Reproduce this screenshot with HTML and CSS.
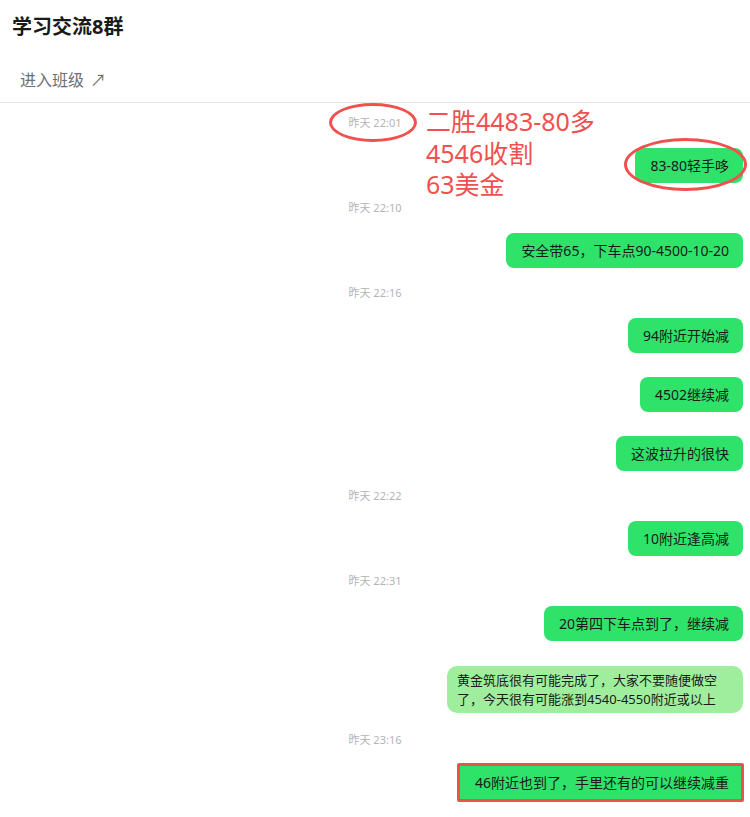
FILE: index.html
```
<!DOCTYPE html>
<html lang="zh-CN">
<head>
    <meta charset="UTF-8">
    <meta name="viewport" content="width=device-width, initial-scale=1.0">
    <title>学习交流8群</title>
    <link rel="stylesheet" href="styles.css">
</head>
<body>
    <div class="header">
        <h1>学习交流8群</h1>
        <a class="enter" href="#">进入班级 <span class="arrow">↗</span></a>
    </div>

    <div class="chat">
        <div class="time">昨天 22:01</div>
        <div class="msg">83-80轻手哆</div>
        <div class="time">昨天 22:10</div>
        <div class="msg">安全带65，下车点90-4500-10-20</div>
        <div class="time">昨天 22:16</div>
        <div class="msg">94附近开始减</div>
        <div class="msg">4502继续减</div>
        <div class="msg">这波拉升的很快</div>
        <div class="time">昨天 22:22</div>
        <div class="msg">10附近逢高减</div>
        <div class="time">昨天 22:31</div>
        <div class="msg">20第四下车点到了，继续减</div>
        <div class="msg light">黄金筑底很有可能完成了，大家不要随便做空了，今天很有可能涨到4540-4550附近或以上</div>
        <div class="time">昨天 23:16</div>
        <div class="msg boxed">46附近也到了，手里还有的可以继续减重</div>

        <!-- annotations drawn over the chat -->
        <div class="note">二胜4483-80多<br>4546收割<br>63美金</div>
        <div class="ring ring-time"></div>
        <div class="ring ring-msg"></div>
    </div>
</body>
</html>
```

FILE: styles.css
```
*{
    margin: 0;
    padding: 0;
    box-sizing: border-box;
}

body{
    background-color: #ffffff;
    font-family: "Noto Sans", "Noto Sans CJK SC", sans-serif;
    color: #1a1a1a;
}

.header{
    border-bottom: 1px solid #e6e6e6;
}

h1{
    font-size: 20px;
    font-weight: 700;
    line-height: 26px;
    padding: 14px 12px 0;
    color: #1a1a1a;
}

.enter{
    display: block;
    padding: 28px 20px 10px;
    font-size: 16px;
    line-height: 24px;
    color: #707070;
    text-decoration: none;
}

.arrow{
    font-size: 16px;
    margin-left: 2px;
}

.chat{
    position: relative;
    display: flex;
    flex-direction: column;
    align-items: flex-end;
    gap: 12px;
    padding: 13px 7px 20px;
}

.time{
    align-self: center;
    font-size: 11px;
    line-height: 14px;
    color: #b4b4b4;
}

.msg{
    margin: 6px 0;
    background-color: #2ee26a;
    border-radius: 8px;
    padding: 0 14px 0 15px;
    height: 35px;
    line-height: 35px;
    font-size: 14px;
    color: #1a1a1a;
}

.msg.light{
    background-color: #9eee9e;
    height: auto;
    width: 296px;
    margin-top: 7px;
    margin-bottom: 8px;
    padding: 5px 5px 4px 10px;
    font-size: 13px;
    line-height: 19px;
    border-radius: 10px;
}

.msg.boxed{
    margin-top: 4px;
    margin-right: -1px;
    height: 39px;
    line-height: 33px;
    border: 3px solid #f0504e;
    border-radius: 2px;
    padding: 0 12px 0 15px;
}

.note{
    position: absolute;
    left: 426px;
    top: 3px;
    font-size: 25px;
    line-height: 31.5px;
    color: #f0504e;
}

.ring{
    position: absolute;
    border: 3px solid #f0504e;
    border-radius: 50%;
}

.ring-time{
    left: 329px;
    top: 0;
    width: 88px;
    height: 39px;
}

.ring-msg{
    left: 624px;
    top: 35px;
    width: 123px;
    height: 53px;
}
```
